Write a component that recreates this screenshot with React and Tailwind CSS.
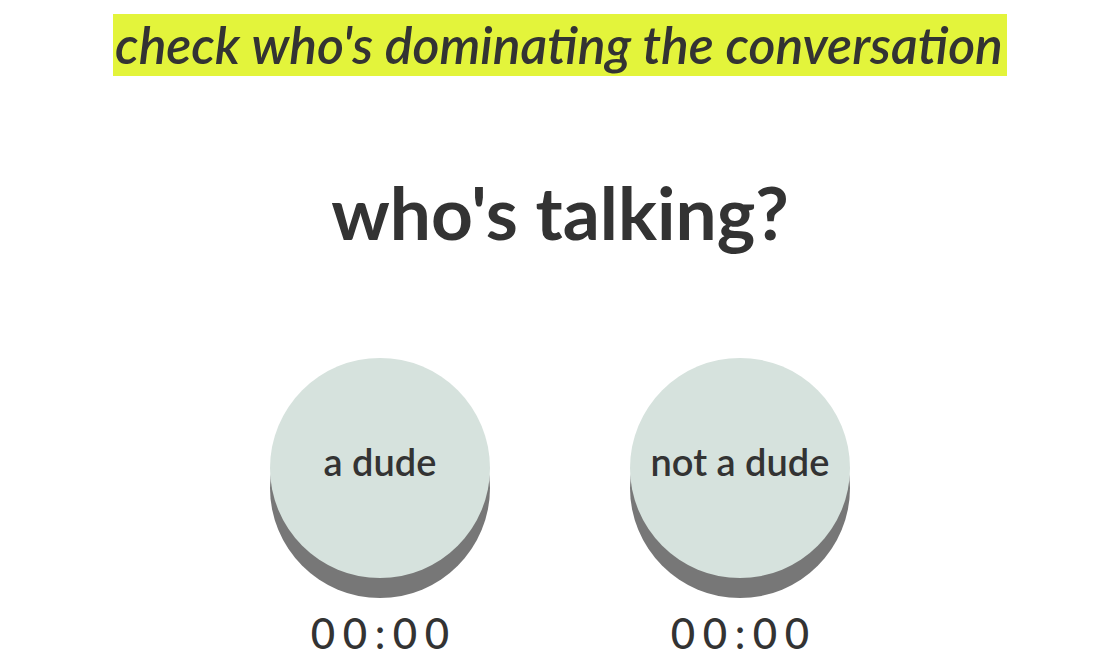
export default function App() {
  const Btn = ({ label }) => (
    <div className="flex flex-col items-center">
      <div className="w-[220px] h-[220px] rounded-full bg-[#d6e2dd] shadow-[0_20px_0_#777777] flex items-center justify-center text-[38px] font-semibold leading-none pb-[14px]">
        {label}
      </div>
      <div className="mt-[34px] text-[42px] font-medium leading-none tracking-[0.18em] pl-[0.18em]">00:00</div>
    </div>
  );
  return (
    <div
      className="min-h-screen bg-white pl-[24px] flex flex-col items-center text-[#333333]"
      style={{ fontFamily: "Lato, 'Noto Sans', sans-serif" }}
    >
      <div className="mt-[14px] h-[62px] bg-[#e3f43b] flex items-center pl-[2px] pr-[4px] text-[51.8px] font-semibold italic leading-none whitespace-nowrap">
        check who's dominating the conversation
      </div>
      <div className="h-[282px] flex items-center justify-center">
        <h1 className="text-[73px] font-bold leading-none -mt-[10px]">who's talking?</h1>
      </div>
      <div className="flex gap-[140px]">
        <Btn label="a dude" />
        <Btn label="not a dude" />
      </div>
    </div>
  );
}
